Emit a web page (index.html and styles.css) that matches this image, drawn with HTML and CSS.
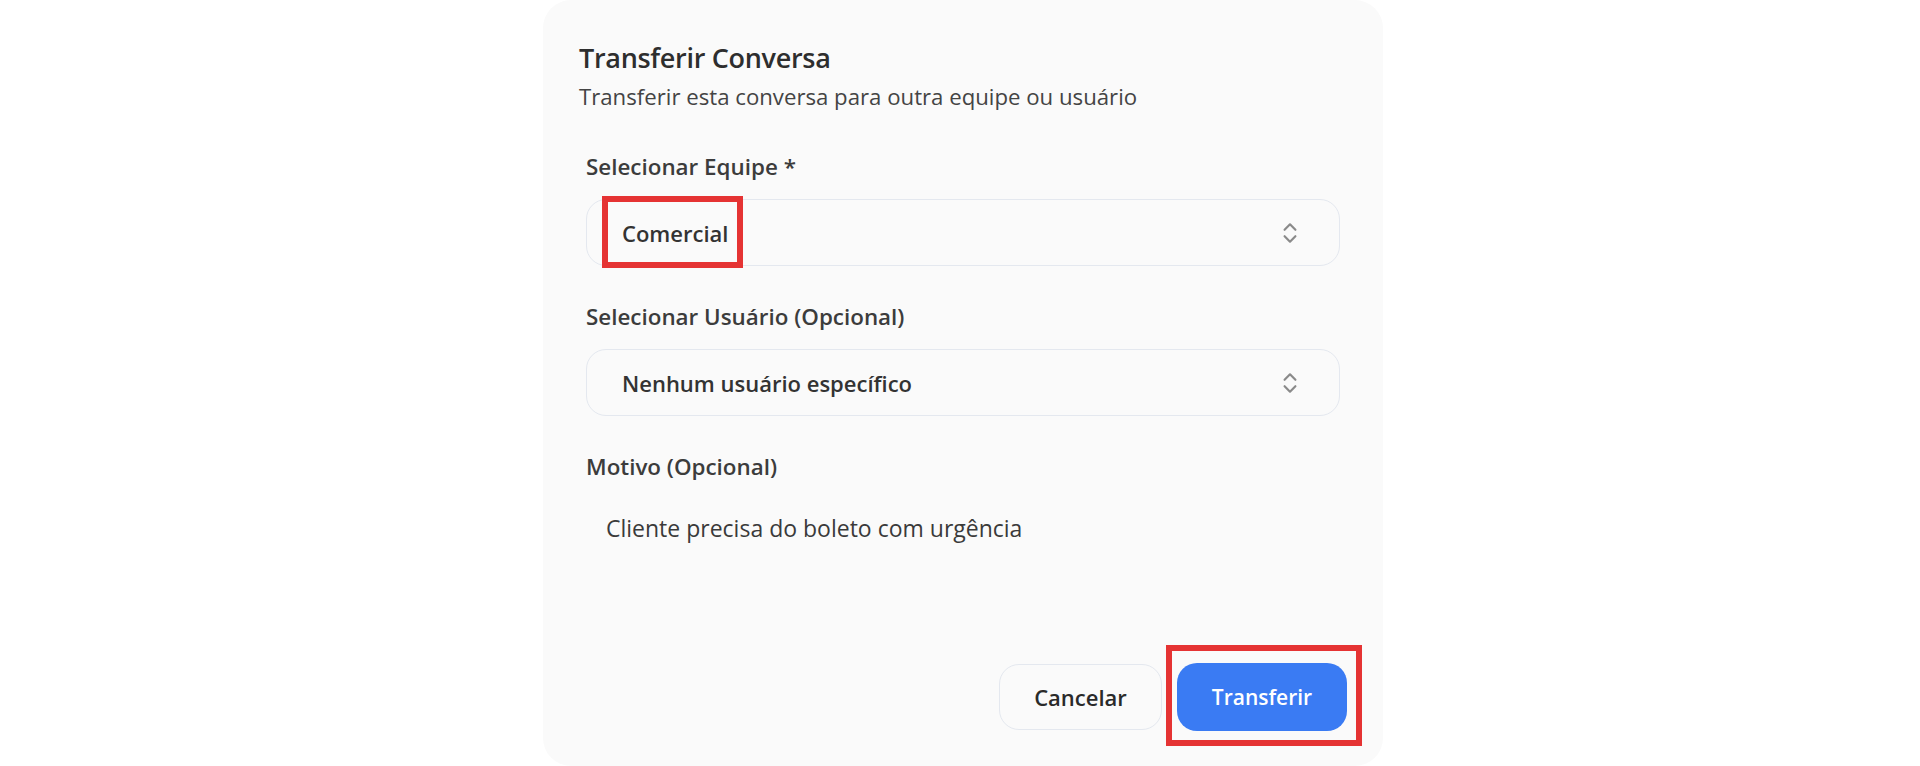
FILE: index.html
```html
<!DOCTYPE html>
<html lang="pt">
<head>
<meta charset="utf-8">
<title>Transferir Conversa</title>
<link rel="stylesheet" href="styles.css">
</head>
<body>
<div class="dialog">
  <header class="dialog-header">
    <h2 class="dialog-title">Transferir Conversa</h2>
    <p class="dialog-desc">Transferir esta conversa para outra equipe ou usuário</p>
  </header>
  <div class="dialog-body">
    <div class="field">
      <label class="field-label">Selecionar Equipe *</label>
      <div class="select">
        <span class="select-value">Comercial</span>
        <svg class="select-icon" viewBox="0 0 24 24" fill="none" stroke="currentColor" stroke-width="2" stroke-linecap="round" stroke-linejoin="round"><path d="m7 15 5 5 5-5"/><path d="m7 9 5-5 5 5"/></svg>
        <span class="highlight highlight-team"></span>
      </div>
    </div>
    <div class="field">
      <label class="field-label">Selecionar Usuário (Opcional)</label>
      <div class="select">
        <span class="select-value">Nenhum usuário específico</span>
        <svg class="select-icon" viewBox="0 0 24 24" fill="none" stroke="currentColor" stroke-width="2" stroke-linecap="round" stroke-linejoin="round"><path d="m7 15 5 5 5-5"/><path d="m7 9 5-5 5 5"/></svg>
      </div>
    </div>
    <div class="field">
      <label class="field-label">Motivo (Opcional)</label>
      <div class="textarea">Cliente precisa do boleto com urgência</div>
    </div>
  </div>
  <footer class="dialog-footer">
    <button class="btn btn-outline">Cancelar</button>
    <button class="btn btn-primary">Transferir<span class="highlight highlight-btn"></span></button>
  </footer>
</div>
</body>
</html>
```
FILE: styles.css
```css
* { box-sizing: border-box; }
html, body { margin: 0; padding: 0; }
body {
  background: #ffffff;
  font-family: "Open Sans", "Noto Sans", sans-serif;
  color: #333;
  display: flex;
  justify-content: center;
  padding-left: 6px;
  height: 766px;
  overflow: hidden;
}
.dialog {
  width: 840px;
  height: 766px;
  background: #fafafa;
  border-radius: 28px;
  padding: 40px 36px 35px 36px;
  display: flex;
  flex-direction: column;
}
.dialog-title {
  margin: 0;
  font-size: 27px;
  font-weight: 600;
  color: #2e2e2e;
  line-height: 36px;
  letter-spacing: -0.3px;
}
.dialog-desc {
  margin: 6px 0 0;
  font-size: 22.2px;
  line-height: 30px;
  color: #444;
}
.dialog-body {
  padding: 0 7px;
  margin-top: 40px;
  display: flex;
  flex-direction: column;
  gap: 36px;
}
.field { display: flex; flex-direction: column; }
.field-label {
  font-size: 22.4px;
  font-weight: 600;
  color: #3c3c3c;
  line-height: 30px;
  margin-bottom: 17px;
}
.select {
  position: relative;
  height: 67px;
  border: 1.5px solid #e4e8ef;
  border-radius: 20px;
  background: #fafafa;
  display: flex;
  align-items: center;
  padding: 0 36px 0 35px;
}
.select-value {
  flex: 1;
  font-size: 22px;
  font-weight: 600;
  color: #333;
}
.select-icon { color: #8a8a8a; width: 26px; height: 26px; flex: none; }
.textarea {
  font-size: 23px;
  line-height: 30px;
  color: #3a3a3a;
  padding: 14px 20px 0;
  height: 150px;
}
.dialog-footer {
  margin-top: auto;
  display: flex;
  justify-content: flex-end;
  align-items: center;
  gap: 15px;
}
.btn {
  position: relative;
  font-family: inherit;
  font-size: 22px;
  font-weight: 600;
  height: 66px;
  padding: 0;
  border-radius: 20px;
  cursor: pointer;
}
.btn-outline {
  background: #fafafa;
  border: 1.5px solid #e4e8ef;
  color: #2a2a2a;
  width: 163px;
}
.btn-primary {
  background: #3a7bf3;
  border: none;
  color: #fff;
  font-size: 21px;
  width: 170px;
  height: 68px;
}
.highlight {
  position: absolute;
  border: 6px solid #e53333;
  pointer-events: none;
}
.highlight-team { left: 15px; top: -4px; width: 141px; height: 72px; }
.highlight-btn { left: -11px; top: -18px; width: 196px; height: 101px; }
```
